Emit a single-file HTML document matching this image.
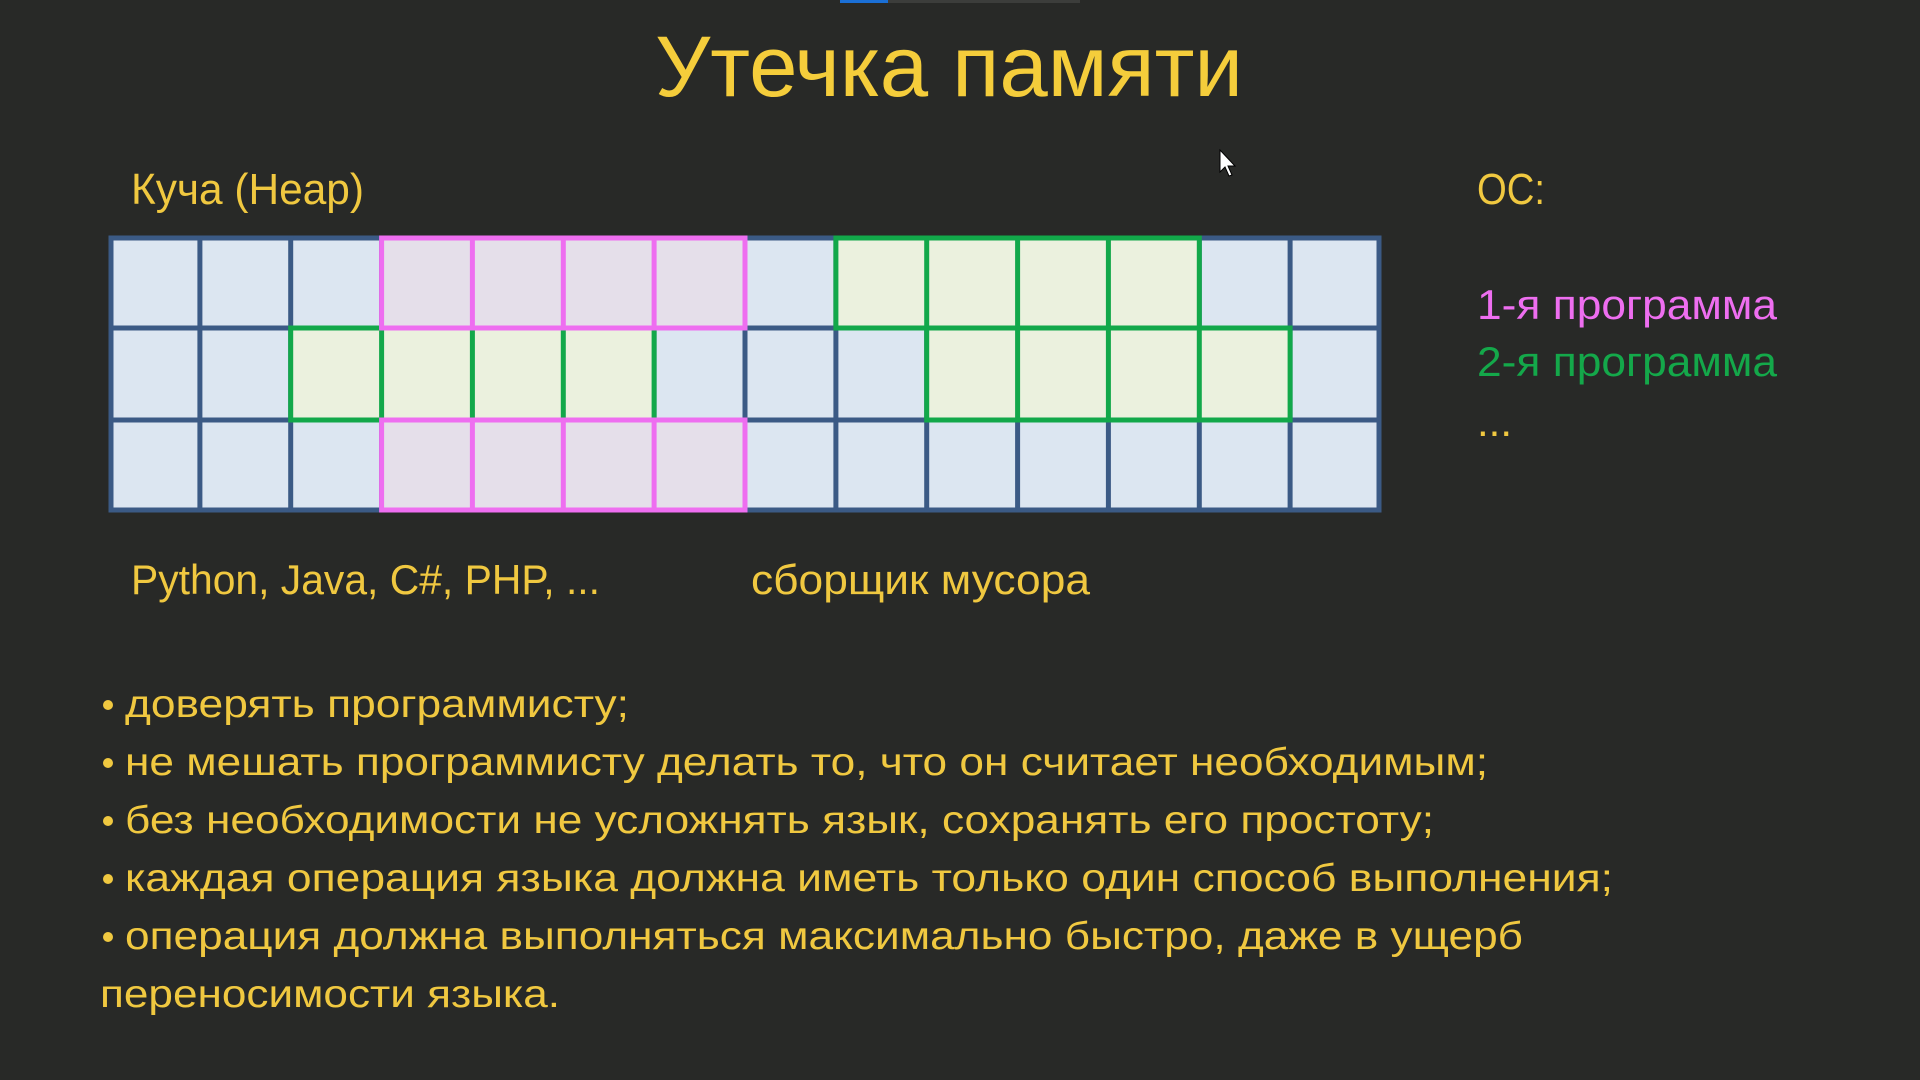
<!DOCTYPE html>
<html><head><meta charset="utf-8"><style>
html,body{margin:0;padding:0;background:#282927;width:1920px;height:1080px;overflow:hidden}
svg{display:block}
text{font-family:"Liberation Sans","DejaVu Sans",sans-serif}
</style></head><body>
<svg width="1920" height="1080" viewBox="0 0 1920 1080">
<rect width="1920" height="1080" fill="#282927"/>
<rect x="840" y="0" width="48" height="3" fill="#1a6fd6"/>
<rect x="888" y="0" width="192" height="3" fill="#3c3d3b"/>
<text x="655" y="96" font-size="86" fill="#f5cd3b" textLength="588" lengthAdjust="spacingAndGlyphs">Утечка памяти</text>
<text x="131" y="204" font-size="44" fill="#f0c840" textLength="233" lengthAdjust="spacingAndGlyphs">Куча (Heap)</text>
<text x="1477" y="204" font-size="44" fill="#f0c840" textLength="68" lengthAdjust="spacingAndGlyphs">ОС:</text>
<text x="1477" y="319" font-size="42" fill="#ee6ef0" textLength="300" lengthAdjust="spacingAndGlyphs">1-я программа</text>
<text x="1477" y="376" font-size="42" fill="#14a84a" textLength="300" lengthAdjust="spacingAndGlyphs">2-я программа</text>
<text x="1477" y="436" font-size="42" fill="#f0c840">...</text>
<text x="131" y="594" font-size="42" fill="#f0c840" textLength="469" lengthAdjust="spacingAndGlyphs">Python, Java, C#, PHP, ...</text>
<text x="751" y="594" font-size="42" fill="#f0c840" textLength="339" lengthAdjust="spacingAndGlyphs">сборщик мусора</text>
<g fill="#f0c840" font-size="39">
<circle cx="108" cy="705" r="5"/><text x="125" y="717" textLength="504" lengthAdjust="spacingAndGlyphs">доверять программисту;</text>
<circle cx="108" cy="763" r="5"/><text x="125" y="775" textLength="1363" lengthAdjust="spacingAndGlyphs">не мешать программисту делать то, что он считает необходимым;</text>
<circle cx="108" cy="821" r="5"/><text x="125" y="833" textLength="1309" lengthAdjust="spacingAndGlyphs">без необходимости не усложнять язык, сохранять его простоту;</text>
<circle cx="108" cy="879" r="5"/><text x="125" y="891" textLength="1488" lengthAdjust="spacingAndGlyphs">каждая операция языка должна иметь только один способ выполнения;</text>
<circle cx="108" cy="937" r="5"/><text x="125" y="949" textLength="1398" lengthAdjust="spacingAndGlyphs">операция должна выполняться максимально быстро, даже в ущерб</text>
<text x="100" y="1007" textLength="460" lengthAdjust="spacingAndGlyphs">переносимости языка.</text>
</g>
<rect x="109" y="236" width="1272" height="276" fill="#dce6f1"/>
<g stroke="#3b5a85" stroke-width="5" fill="none">
<rect x="111" y="238" width="1268" height="272"/>
<line x1="109" y1="328" x2="1381" y2="328"/>
<line x1="109" y1="420" x2="1381" y2="420"/>
<line x1="199.9" y1="236" x2="199.9" y2="512"/>
<line x1="290.7" y1="236" x2="290.7" y2="512"/>
<line x1="381.6" y1="236" x2="381.6" y2="512"/>
<line x1="472.4" y1="236" x2="472.4" y2="512"/>
<line x1="563.3" y1="236" x2="563.3" y2="512"/>
<line x1="654.1" y1="236" x2="654.1" y2="512"/>
<line x1="745" y1="236" x2="745" y2="512"/>
<line x1="835.9" y1="236" x2="835.9" y2="512"/>
<line x1="926.7" y1="236" x2="926.7" y2="512"/>
<line x1="1017.6" y1="236" x2="1017.6" y2="512"/>
<line x1="1108.4" y1="236" x2="1108.4" y2="512"/>
<line x1="1199.3" y1="236" x2="1199.3" y2="512"/>
<line x1="1290.1" y1="236" x2="1290.1" y2="512"/>
</g>
<g stroke="#12a84a" stroke-width="5" fill="#ebf1de">
<rect x="835.9" y="238" width="363.4" height="90"/>
<line x1="926.7" y1="238" x2="926.7" y2="328"/><line x1="1017.6" y1="238" x2="1017.6" y2="328"/><line x1="1108.4" y1="238" x2="1108.4" y2="328"/>
<rect x="290.7" y="328" width="363.4" height="92"/>
<line x1="381.6" y1="328" x2="381.6" y2="420"/><line x1="472.4" y1="328" x2="472.4" y2="420"/><line x1="563.3" y1="328" x2="563.3" y2="420"/>
<rect x="926.7" y="328" width="363.4" height="92"/>
<line x1="1017.6" y1="328" x2="1017.6" y2="420"/><line x1="1108.4" y1="328" x2="1108.4" y2="420"/><line x1="1199.3" y1="328" x2="1199.3" y2="420"/>
</g>
<g stroke="#ee6ef0" stroke-width="5" fill="#e5dfea">
<rect x="381.6" y="238" width="363.4" height="90"/>
<line x1="472.4" y1="238" x2="472.4" y2="328"/><line x1="563.3" y1="238" x2="563.3" y2="328"/><line x1="654.1" y1="238" x2="654.1" y2="328"/>
<rect x="381.6" y="420" width="363.4" height="90"/>
<line x1="472.4" y1="420" x2="472.4" y2="510"/><line x1="563.3" y1="420" x2="563.3" y2="510"/><line x1="654.1" y1="420" x2="654.1" y2="510"/>
</g>
<path d="M1220 150 L1220 172 L1225 167 L1229 176 L1232 175 L1228 166 L1235 166 Z" fill="#fff" stroke="#000" stroke-width="1"/>
</svg>
</body></html>
